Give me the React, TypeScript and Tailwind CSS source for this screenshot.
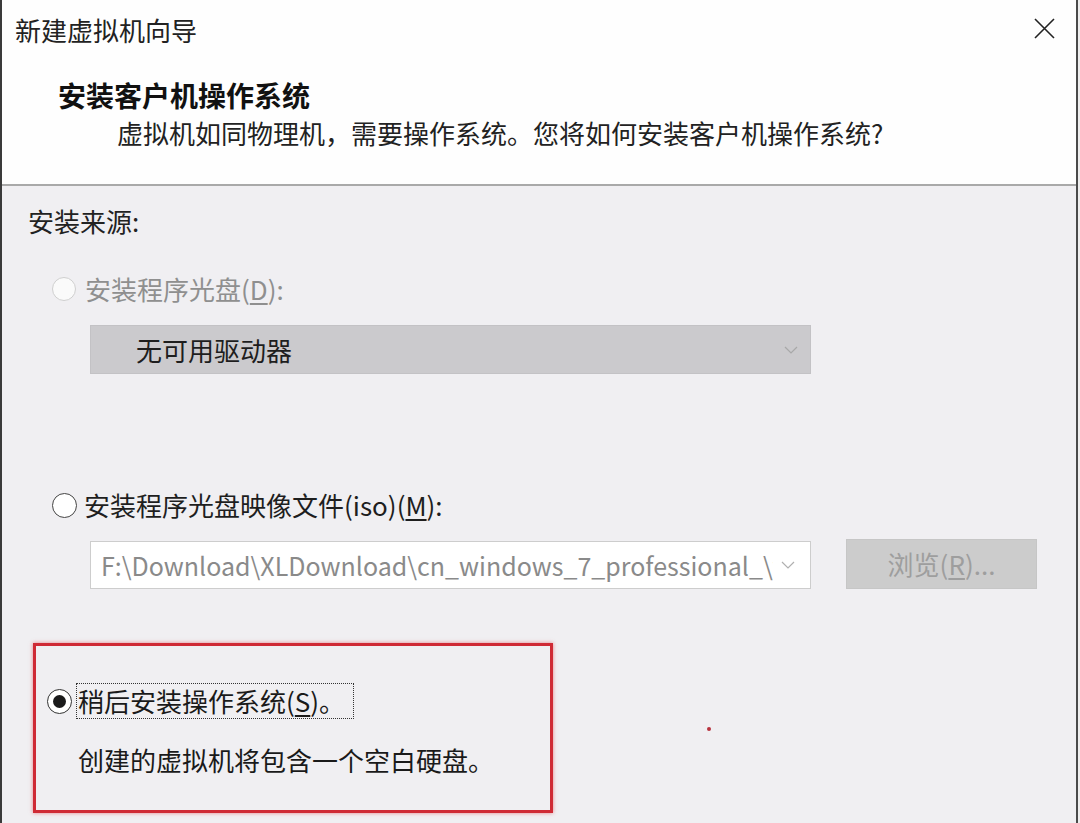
import React from "react";

const font = "font-['Noto_Sans_CJK_SC','Noto_Sans',sans-serif]";

function Chevron({ color }: { color: string }) {
  return (
    <svg width="14" height="8" viewBox="0 0 14 8" fill="none">
      <path d="M1 1 L7 7 L13 1" stroke={color} strokeWidth="1.2" />
    </svg>
  );
}

export default function App() {
  return (
    <div className={`${font} relative w-[1080px] h-[823px] overflow-hidden bg-[#f0eff2] text-[#1a1a1a]`}>
      <div className="flex h-full">
        <div className="w-[2px] bg-[#3a3a3a]" />
        <div className="flex w-[1074px] flex-col">
          {/* Header */}
          <div className="flex h-[184px] flex-col bg-[#fefefe]">
            <div className="flex items-start justify-between pt-[17px]">
              <div className="ml-[13px] h-[26px] text-[26px] leading-[26px] text-[#222]">新建虚拟机向导</div>
              <svg className="mr-[21px] mt-[1px]" width="21" height="21" viewBox="0 0 21 21" fill="none">
                <path d="M1 1 L20 20 M20 1 L1 20" stroke="#222" strokeWidth="1.6" />
              </svg>
            </div>
            <div className="ml-[56px] mt-[38px] h-[28px] text-[28px] font-bold leading-[28px] text-[#111]">
              安装客户机操作系统
            </div>
            <div className="ml-[115px] mt-[11px] h-[26px] text-[26px] leading-[26px] text-[#222]">
              虚拟机如同物理机，需要操作系统。您将如何安装客户机操作系统?
            </div>
          </div>
          <div className="h-[2px] bg-[#a9a9a9]" />

          {/* Body */}
          <div className="flex flex-col">
            <div className="ml-[26px] mt-[22px] h-[26px] text-[26px] leading-[26px] text-[#222]">安装来源:</div>

            <div className="ml-[50px] mt-[42px] flex h-[26px] items-center">
              <div className="h-[24px] w-[24px] rounded-full border border-[#cfcfcf] bg-[#fafafa]" />
              <div className="ml-[9px] text-[26px] leading-[26px] text-[#8f8f8f]">
                安装程序光盘(<span className="underline underline-offset-[3px]">D</span>):
              </div>
            </div>

            <div className="ml-[88px] mt-[23px] flex h-[49px] w-[721px] items-center justify-between border border-[#c3c2c5] bg-[#cbcacd]">
              <div className="ml-[45px] text-[26px] leading-[26px] text-[#1e1e1e]">无可用驱动器</div>
              <div className="mr-[12px]">
                <Chevron color="#a8a8a8" />
              </div>
            </div>

            <div className="ml-[50px] mt-[118px] flex h-[26px] items-center">
              <div className="h-[25px] w-[25px] rounded-full border-[1.5px] border-[#444] bg-white" />
              <div className="ml-[7px] text-[26px] leading-[26px] text-[#1e1e1e]">
                安装程序光盘映像文件(iso)(<span className="underline underline-offset-[3px]">M</span>):
              </div>
            </div>

            <div className="ml-[88px] mt-[21px] flex h-[50px] items-start">
              <div className="mt-[2px] flex h-[48px] w-[721px] items-center border border-[#cdcdcd] bg-white">
                <div className="ml-[10px] h-[36px] w-[672px] overflow-hidden whitespace-nowrap text-[25px] leading-[36px] text-[#8a8a8a]">
                  F:\Download\XLDownload\cn_windows_7_professional_\with_sp1_x64_dvd.iso
                </div>
                <div className="ml-[8px]">
                  <Chevron color="#b0b0b0" />
                </div>
              </div>
              <div className="ml-[35px] flex h-[50px] w-[191px] items-center justify-center border border-[#c6c6c6] bg-[#cccccc] text-[26px] leading-[26px] text-[#9e9e9e]">
                <span>
                  浏览(<span className="underline underline-offset-[3px]">R</span>)...
                </span>
              </div>
            </div>

            <div className="ml-[31px] mt-[54px] flex h-[170px] w-[520px] flex-col border-[3px] border-[#cf2a35] shadow-[0_0_4px_rgba(220,40,50,0.55)]">
              <div className="ml-[11px] mt-[37px] flex h-[36px] items-center">
                <div className="flex h-[25px] w-[25px] items-center justify-center rounded-full border-[1.5px] border-[#333] bg-white">
                  <div className="h-[13px] w-[13px] rounded-full bg-[#1a1a1a]" />
                </div>
                <div className="ml-[4px] flex h-[36px] items-center border border-dotted border-[#333] pl-[1px] pr-[8px] text-[26px] leading-[26px] text-[#1a1a1a]">
                  稍后安装操作系统(<span className="underline underline-offset-[3px]">S</span>)。
                </div>
              </div>
              <div className="ml-[42px] mt-[28px] h-[26px] text-[26px] leading-[26px] text-[#1a1a1a]">
                创建的虚拟机将包含一个空白硬盘。
              </div>
            </div>
          </div>
        </div>
        <div className="w-[2px] bg-[#4a4a4a]" />
        <div className="w-[2px] bg-[#eeeeee]" />
      </div>
      <div className="absolute left-[707px] top-[727px] h-[4px] w-[4px] rounded-full bg-[#b8323e]" />
    </div>
  );
}
